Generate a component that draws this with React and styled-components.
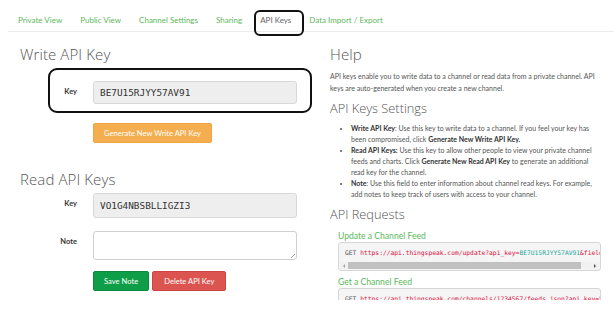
import React from "react";
import styled, { createGlobalStyle } from "styled-components";

const Global = createGlobalStyle`
  html, body { margin: 0; padding: 0; background: #fff; }
  body { font-family: Lato, "Open Sans", "Liberation Sans", sans-serif; color: #555; }
  * { box-sizing: border-box; }
`;

const Page = styled.div`
  width: 614px;
  height: 300px;
  overflow: hidden;
  background: #fff;
`;

const TabBar = styled.nav`
  margin-left: 8px;
  padding: 10px 0 0 1px;
  display: flex;
  border-bottom: 1px solid #ececec;
`;

const Tab = styled.div`
  position: relative;
  padding: 0 9px;
  line-height: 21px;
  font-size: 8px;
  color: ${(p) => (p.$active ? "#666" : "#5cb85c")};
  white-space: nowrap;
  ${(p) =>
    p.$annotated &&
    `
    &::after {
      content: "";
      position: absolute;
      left: 3px; right: -4px; top: 0px; bottom: -5px;
      border: 2px solid #111;
      border-radius: 6px;
    }
  `}
`;

const Columns = styled.div`
  display: grid;
  grid-template-columns: 309px 1fr;
`;

const Left = styled.section`
  padding-left: 20px;
`;

const Right = styled.section`
  padding-left: 21px;
  padding-right: 14px;
`;

const H1 = styled.h2`
  margin: ${(p) => p.$mt || "12px"} 0 0;
  font-family: "Open Sans", "Liberation Sans", sans-serif;
  font-weight: 300;
  font-size: 15px;
  line-height: 20px;
  color: #555;
  letter-spacing: 0.1px;
`;

const H2 = styled.h3`
  margin: ${(p) => p.$mt || "12px"} 0 0;
  font-family: "Open Sans", "Liberation Sans", sans-serif;
  font-weight: 300;
  font-size: 12.8px;
  line-height: 18px;
  color: #555;
`;

const FormRow = styled.div`
  position: relative;
  display: grid;
  width: 277px;
  grid-template-columns: 57px 204px;
  column-gap: 16px;
  margin-top: ${(p) => p.$mt || "0px"};
  ${(p) =>
    p.$annotated &&
    `
    &::after {
      content: "";
      position: absolute;
      left: 28px; right: -15px; top: -13px; bottom: -9px;
      border: 2px solid #111;
      border-radius: 9px;
    }
  `}
`;

const Label = styled.label`
  text-align: right;
  font-size: 7.5px;
  font-weight: 700;
  color: #333;
  padding-top: ${(p) => p.$pt || "6px"};
`;

const KeyField = styled.div`
  height: ${(p) => p.$h || "24px"};
  background: #eeeeee;
  border: 1px solid #d8d8d8;
  border-radius: 3px;
  padding: 0 6px;
  display: flex;
  align-items: center;
  font-family: "DejaVu Sans Mono", "Liberation Mono", monospace;
  font-size: 9.4px;
  color: #333;
`;

const NoteArea = styled.div`
  position: relative;
  height: 29px;
  background: #fff;
  border: 1px solid #d0d0d0;
  border-radius: 3px;
  &::after {
    content: "";
    position: absolute;
    right: 1px; bottom: 1px;
    width: 4px; height: 4px;
    background: linear-gradient(135deg, transparent 45%, #aaa 45%, #aaa 55%, transparent 55%);
  }
`;

const ButtonRow = styled.div`
  display: flex;
  gap: 3px;
  margin: ${(p) => p.$mt || "0"} 0 0 73px;
`;

const Button = styled.div`
  height: 20px;
  padding: 0 ${(p) => p.$px || "8px"};
  display: flex;
  align-items: center;
  font-size: 7.6px;
  color: #fff;
  border-radius: 2px;
  background: ${(p) => p.$bg};
  border: 1px solid ${(p) => p.$border};
`;

const Para = styled.p`
  margin: 7px 0 0;
  font-size: 7px;
  line-height: 11.5px;
  color: #555;
`;

const List = styled.ul`
  margin: 6px 0 0;
  padding-left: 21px;
  font-size: 7px;
  line-height: 11px;
  color: #555;
  b { color: #333; font-weight: 700; }
`;

const FeedTitle = styled.div`
  margin: ${(p) => p.$mt || "7px"} 0 0 8px;
  font-size: 8.6px;
  line-height: 10px;
  color: #5cb85c;
`;

const CodeBox = styled.div`
  margin: 1px 0 0 8px;
  width: 263px;
  background: #f5f5f5;
  border: 1px solid #d6d6d6;
  border-radius: 3px;
  padding: 5px 1px 1px;
  overflow: hidden;
`;

const CodeLine = styled.div`
  padding-left: 5px;
  white-space: nowrap;
  font-family: "DejaVu Sans Mono", "Liberation Mono", monospace;
  font-size: 6.3px;
  line-height: 10px;
  color: #555;
`;

const Url = styled.span`
  color: #dd1144;
`;
const KeyText = styled.span`
  color: #20a89a;
`;

const Scrollbar = styled.div`
  margin-top: 4px;
  height: 7px;
  display: flex;
  align-items: center;
  background: #f1f1f1;
`;

const Arrow = styled.div`
  width: 8px;
  display: flex;
  justify-content: center;
  &::before {
    content: "";
    border-top: 2px solid transparent;
    border-bottom: 2px solid transparent;
    ${(p) => (p.$dir === "left" ? "border-right: 2px solid #a3a3a3;" : "border-left: 2px solid #505050;")}
  }
`;

const Thumb = styled.div`
  flex: 1;
  height: 7px;
  background: #c1c1c1;
  margin-right: 10px;
`;

export default function App() {
  return (
    <Page>
      <Global />
      <TabBar>
        <Tab>Private View</Tab>
        <Tab>Public View</Tab>
        <Tab>Channel Settings</Tab>
        <Tab>Sharing</Tab>
        <Tab $active $annotated>API Keys</Tab>
        <Tab>Data Import / Export</Tab>
      </TabBar>
      <Columns>
        <Left>
          <H1 $mt="12px">Write API Key</H1>
          <FormRow $annotated $mt="17px">
            <Label>Key</Label>
            <KeyField $h="23px">BE7U15RJYY57AV91</KeyField>
          </FormRow>
          <ButtonRow $mt="19px">
            <Button $bg="#f5ae4f" $border="#f0a540" $px="10px">Generate New Write API Key</Button>
          </ButtonRow>
          <H1 $mt="26px">Read API Keys</H1>
          <FormRow $mt="4px">
            <Label>Key</Label>
            <KeyField $h="25px">VO1G4NBSBLLIGZI3</KeyField>
          </FormRow>
          <FormRow $mt="13px">
            <Label $pt="6px">Note</Label>
            <NoteArea />
          </FormRow>
          <ButtonRow $mt="11px">
            <Button $bg="#0f9e48" $border="#0b8a3e" $px="10px">Save Note</Button>
            <Button $bg="#db5450" $border="#cf4440" $px="11px">Delete API Key</Button>
          </ButtonRow>
        </Left>
        <Right>
          <H1 $mt="12px">Help</H1>
          <Para>
            API keys enable you to write data to a channel or read data from a private channel. API keys are
            auto-generated when you create a new channel.
          </Para>
          <H2 $mt="5px">API Keys Settings</H2>
          <List>
            <li>
              <b>Write API Key</b>: Use this key to write data to a channel. If you feel your key has been
              compromised, click <b>Generate New Write API Key.</b>
            </li>
            <li>
              <b>Read API Keys:</b> Use this key to allow other people to view your private channel feeds and
              charts. Click <b>Generate New Read API Key</b> to generate an additional read key for the channel.
            </li>
            <li>
              <b>Note</b>: Use this field to enter information about channel read keys. For example, add notes
              to keep track of users with access to your channel.
            </li>
          </List>
          <H2 $mt="5px">API Requests</H2>
          <FeedTitle $mt="8px">Update a Channel Feed</FeedTitle>
          <CodeBox>
            <CodeLine>
              GET <Url>https://api.thingspeak.com/update?api_key=</Url>
              <KeyText>BE7U15RJYY57AV91</KeyText>
              <Url>&amp;field1=0</Url>
            </CodeLine>
            <Scrollbar>
              <Arrow $dir="left" />
              <Thumb />
              <Arrow $dir="right" />
            </Scrollbar>
          </CodeBox>
          <FeedTitle $mt="6px">Get a Channel Feed</FeedTitle>
          <CodeBox>
            <CodeLine>
              GET <Url>https://api.thingspeak.com/channels/1234567/feeds.json?api_key=</Url>
              <KeyText>VO1G4NBSBLLIGZI3</KeyText>
            </CodeLine>
          </CodeBox>
        </Right>
      </Columns>
    </Page>
  );
}
